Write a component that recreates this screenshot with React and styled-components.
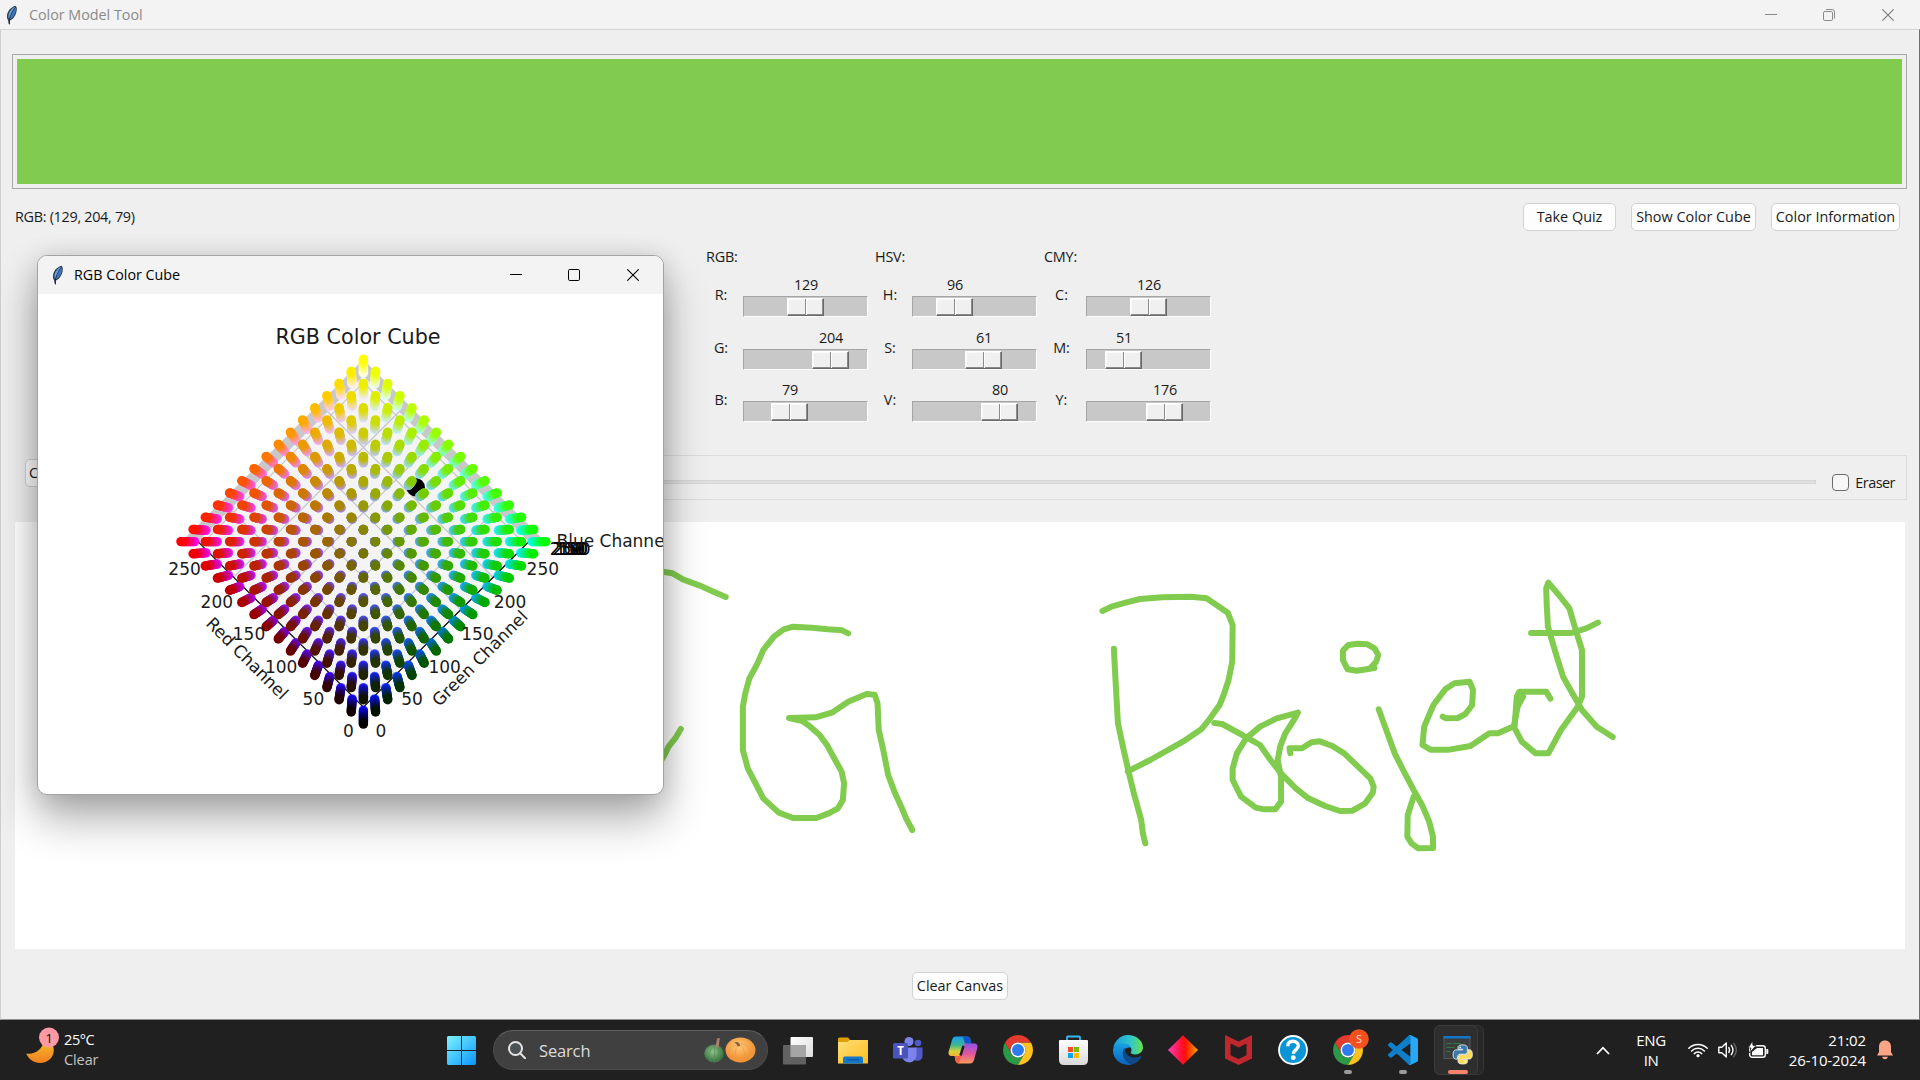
import React from "react";
import styled, { createGlobalStyle } from "styled-components";

const GREEN = "#81cc4f";

const Global = createGlobalStyle`
  html, body { margin: 0; padding: 0; background: #efefef; overflow: hidden; }
  * { box-sizing: border-box; }
  body { font-family: "Open Sans", "Noto Sans", sans-serif; font-size: 14.4px; color: #1a1a1a; }
  svg { display: block; flex: none; }
`;

const Desktop = styled.div`
  position: relative;
  width: 1920px;
  height: 1080px;
  overflow: hidden;
  display: flex;
  flex-direction: column;
`;

/* ---------- main window ---------- */

const MainWindow = styled.main`
  height: 1020px;
  display: flex;
  flex-direction: column;
  background: #efefef;
`;

const TitleBar = styled.header`
  height: ${(p) => p.$height}px;
  flex: none;
  display: flex;
  align-items: center;
  background: #f3f3f3;
  color: ${(p) => p.$color};
  padding-left: ${(p) => p.$inset}px;
`;

const WindowTitle = styled.span`
  font-size: 14.3px;
  line-height: 20px;
  margin-left: ${(p) => p.$gap}px;
  flex: 1;
`;

const WindowButtons = styled.div`
  display: flex;
  align-items: center;
  gap: 46px;
  padding-right: ${(p) => p.$right}px;
  & > :last-child { margin-left: 1px; }
`;

const Body = styled.div`
  flex: 1;
  display: flex;
  flex-direction: column;
  border-top: 1px solid #d5d5d5;
  border-left: 1px solid #cfcfcf;
  border-right: 1px solid #6f6f6f;
  border-bottom: 1px solid #8f9090;
`;

const PreviewFrame = styled.div`
  margin: 24px 12px 0 11px;
  height: 135px;
  border: 1px solid #a8a8a8;
  padding: 4px;
  flex: none;
`;

const Preview = styled.div`
  height: 100%;
  background: ${GREEN};
`;

const InfoRow = styled.div`
  margin-top: 14px;
  height: 28px;
  padding: 0 19px 0 14px;
  display: flex;
  align-items: center;
  gap: 15px;
`;

const InfoText = styled.span`
  flex: 1;
  letter-spacing: -0.3px;
  padding-bottom: 1px;
`;

const Button = styled.button`
  width: ${(p) => p.$width}px;
  height: 28px;
  padding: 0 0 1px;
  flex: none;
  border: 1px solid #d2d2d2;
  border-radius: 5px;
  background: #fdfdfd;
  font: inherit;
  color: inherit;
  white-space: nowrap;
`;

const Groups = styled.section`
  display: flex;
  gap: 7px;
  margin-left: 705px;
  margin-top: 15px;
  height: 182px;
`;

const Group = styled.div`
  display: grid;
  grid-template-columns: ${(p) => p.$label}px 125px;
  grid-template-rows: 24px repeat(3, 52.5px);
  column-gap: 7px;
`;

const GroupName = styled.span`
  grid-column: 1 / 3;
  line-height: 22px;
  letter-spacing: -0.2px;
`;

const ChannelName = styled.span`
  line-height: 20px;
  padding-top: 15px;
  text-align: center;
`;

const Scale = styled.div`
  padding-top: 4px;
`;

const ScaleValue = styled.div`
  width: 38px;
  margin-left: ${(p) => p.$x}px;
  text-align: center;
  line-height: 22px;
  letter-spacing: -0.3px;
`;

const Trough = styled.div`
  height: 21px;
  background: #c8c8c8;
  border: 1px solid;
  border-color: #a5a5a5 #fff #fff #a5a5a5;
  padding-top: 1px;
`;

const Thumb = styled.div`
  width: 37px;
  height: 18px;
  margin-left: ${(p) => p.$x - 1}px;
  display: flex;
  border: 1px solid;
  border-color: #fff #696969 #696969 #fff;
  box-shadow: inset -1px -1px 0 #8a8a8a, inset 1px 1px 0 #fafafa;
  background: #f0f0f0;
  &::before {
    content: "";
    width: 17px;
    border-right: 1px solid #8c8c8c;
  }
  &::after {
    content: "";
    width: 1px;
    background: #fff;
  }
`;

const BrushRow = styled.section`
  margin: 27px 12px 0 24px;
  height: 45px;
  flex: none;
  display: flex;
  align-items: flex-start;
  gap: 14px;
  & > button { margin-top: 4px; }
`;

const BrushBar = styled.div`
  flex: 1;
  height: 45px;
  border: 1px solid #dcdcdc;
  display: flex;
  padding: 3px 11px 0;
`;

const BrushTrack = styled.div`
  flex: 1;
  height: 4px;
  margin: 21px 16px 0 8px;
  background: #e0e0e0;
  border: 1px solid #d6d6d6;
`;

const Check = styled.label`
  display: flex;
  align-items: center;
  height: 28px;
  margin-top: 9px;
  gap: 6px;
  letter-spacing: -0.5px;
`;

const Box = styled.i`
  width: 17px;
  height: 17px;
  border: 1px solid #6b6b6b;
  border-radius: 4px;
  background: #f7f7f7;
`;

const CanvasArea = styled.section`
  margin: 22px 14px 0;
  height: 427px;
  flex: none;
  background: #fff;
`;

const ClearRow = styled.div`
  display: flex;
  justify-content: center;
  padding-top: 23px;
`;

/* ---------- popup ---------- */

const Popup = styled.section`
  position: absolute;
  left: 37px;
  top: 255px;
  width: 627px;
  height: 540px;
  border: 1px solid #a3a3a3;
  border-radius: 10px;
  background: #fff;
  overflow: hidden;
  box-shadow: 0 24px 44px rgba(0, 0, 0, 0.32), 0 2px 26px rgba(0, 0, 0, 0.13);
`;

/* ---------- taskbar ---------- */

const Taskbar = styled.footer`
  height: 60px;
  background: #202020;
  color: #fff;
  display: flex;
  align-items: center;
  font-size: 15px;
`;

const Weather = styled.div`
  width: 447px;
  height: 60px;
  display: flex;
  padding: 6px 0 0 26px;
  gap: 4px;
`;

const WeatherText = styled.div`
  padding-top: 4px;
  font-size: 14.5px;
  line-height: 20px;
  letter-spacing: -0.4px;
  & > div + div { color: #c4c4c4; letter-spacing: -0.1px; }
`;

const SearchBox = styled.div`
  width: 275px;
  height: 40px;
  margin-left: 17px;
  margin-right: 15px;
  border-radius: 20px;
  background: #404040;
  border: 1px solid #4c4c4c;
  border-top-color: #626262;
  display: flex;
  align-items: center;
  padding: 0 11px 0 14px;
`;

const SearchText = styled.span`
  flex: 1;
  margin-left: 13px;
  font-size: 16.5px;
  letter-spacing: -0.15px;
  color: #dcdcdc;
`;

const Apps = styled.div`
  display: flex;
  align-items: center;
  height: 60px;
`;

const AppSlot = styled.div`
  width: 55px;
  height: 60px;
  display: flex;
  flex-direction: column;
  align-items: center;
  justify-content: ${(p) => (p.$running ? "flex-end" : "center")};
  padding-bottom: ${(p) => (p.$running ? 6 : 0)}px;
  &::after {
    content: "";
    display: ${(p) => (p.$running ? "block" : "none")};
    width: 8px;
    height: 4px;
    margin-top: 5px;
    border-radius: 2px;
    background: #9a9a9a;
  }
`;

const ActiveStack = styled.div`
  width: 50px;
  height: 50px;
  margin-left: 3px;
  border-radius: 6px;
  background: #282828;
  border: 1px solid #363636;
`;

const ActiveTile = styled.div`
  width: 44px;
  height: 50px;
  margin: -1px;
  border: 1px solid #3c3c3c;
  border-radius: 6px;
  background: #2e2e2e;
  display: flex;
  flex-direction: column;
  align-items: center;
  padding: 9px 0 0 4px;
  &::after {
    content: "";
    width: 20px;
    height: 4px;
    margin-top: 5px;
    border-radius: 2px;
    background: #f4836a;
  }
`;

const Tray = styled.div`
  flex: 1;
  height: 60px;
  display: flex;
  align-items: center;
  justify-content: flex-end;
  padding-right: 27px;
`;

const TrayText = styled.div`
  text-align: ${(p) => p.$align};
  width: ${(p) => p.$width}px;
  margin-right: ${(p) => p.$right}px;
  line-height: 20px;
  padding-bottom: 1px;
  letter-spacing: ${(p) => p.$spacing}px;
`;

const Spacer = styled.i`
  width: ${(p) => p.$w}px;
`;

/* ---------- drawings ---------- */

const Feather = () => (
  <svg width="12" height="20" viewBox="0 0 12 20">
    <path d="M9.5 .8C5 2 1.500 6 1 10.500c-.2 2 .2 3.500 1 4.500L3 19.500l1-.2-.2-3.800C7 14.500 9.500 11 10.500 6.500 11 4 11 2 9.500.8z" fill="#2c3d55" />
    <path d="M9.300 1.700C6 3 3 6.500 2.500 10.500c-.2 1.500 0 2.500.4 3.300C4.500 9 6 5.500 9.300 1.700z" fill="#6ea5e0" />
    <path d="M9.800 2.200C7 5.500 5 10 4 14.200 6.800 12.800 8.800 10 9.700 6.200c.4-1.600.5-3 .1-4z" fill="#3c78c2" />
    <path d="M3.300 19L3.500 14" stroke="#222" strokeWidth="1" />
  </svg>
);

const Minimize = ({ color }) => (
  <svg width="12" height="12" viewBox="0 0 12 12"><path d="M0 5.500h12" stroke={color} /></svg>
);
const Maximize = ({ color }) => (
  <svg width="12" height="12" viewBox="0 0 12 12"><rect x=".5" y=".5" width="11" height="11" rx="1.300" fill="none" stroke={color} /></svg>
);
const Restore = ({ color }) => (
  <svg width="12" height="12" viewBox="0 0 12 12" fill="none" stroke={color}>
    <rect x=".5" y="2.500" width="9" height="9" rx="1.300" />
    <path d="M3 .5h6a2.500 2.500 0 0 1 2.500 2.500v6.500" />
  </svg>
);
const Close = ({ color }) => (
  <svg width="12" height="12" viewBox="0 0 12 12"><path d="M.3.3l11.400 11.400M11.700.3L.3 11.700" stroke={color} strokeWidth="1.100" /></svg>
);

const STROKES_LEFT = [
  "M40 392L60 396 80 400 105 418 145 436 180 455 210 471",
  "M100 867L88 892 70 920 60 945 50 965",
  "M510 580L495 571 460 568 420 563 375 560 352 568 328 590 302 630 288 670 268 715 258 760 252 800 252 930 264 985 285 1035 302 1075 340 1118 375 1134 432 1134 462 1120 485 1105 497 1080 500 1030 494 995 476 955 458 915 440 885 415 858 398 843 365 834 430 832 470 818 510 785 555 762 575 764 582 790 585 870 596 930 608 1005 625 1060 640 1100 652 1135 667 1170",
  "M1133 513L1155 500 1190 488 1225 477 1280 472 1350 470 1388 475 1415 497 1440 518 1452 555 1451 665 1442 720 1430 765 1420 795 1395 838 1375 868 1330 905 1250 960 1195 994",
  "M1161 626L1165 720 1171 850 1185 930 1198 1000 1210 1060 1228 1140 1232 1180 1238 1210",
];

const STROKES_RIGHT = [
  "M-109 849L-90 852 -35 890 0 915 25 960 50 1000 85 1045 115 1075 155 1098 190 1113 220 1112 250 1090 268 1058 270 1040 262 1015 200 940 172 918 142 904 122 907 100 925 70 925 72 940",
  "M90 818L40 835 0 860 -33 895 -55 940 -65 985 -65 1020 -45 1070 -10 1103 10 1108 36 1108 50 1085 50 1010 42 960 48 920 60 880 78 845 90 818",
  "M272 684L230 692 208 688 197 660 197 632 210 615 232 611 255 613 272 625 281 645 276 665 264 682",
  "M282 808L300 870 320 940 340 990 365 1050 385 1095 402 1145 411 1190 411 1224 376 1225 360 1210 350 1190 351 1125 365 1070",
  "M434 830L442 835 470 834 488 822 504 795 506 750 498 725 462 730 440 748 412 795 390 860 386 915 405 929 450 929 500 918 545 880 565 880 605 858 610 770 616 755 680 755 690 776",
  "M625 770L612 800 603 860 622 905 655 940 685 940 715 870 755 800 765 770 765 630 750 570 735 505 710 465 685 428 680 445 681 490 684 560 705 650 720 710 740 755 765 810 800 860 838 891",
  "M644 579L740 579 775 565 803 548",
];

const Handwriting = () => (
  <svg width="1890" height="427" viewBox="15 522 1890 427" fill="none" stroke={GREEN} strokeWidth="6" strokeLinecap="round" strokeLinejoin="round">
    <g transform="translate(640 440) scale(0.40816 0.33333)">
      {STROKES_LEFT.map((d) => <path key={d} d={d} vectorEffect="non-scaling-stroke" />)}
    </g>
    <g transform="translate(1260 440) scale(0.42091 0.33333)">
      {STROKES_RIGHT.map((d) => <path key={d} d={d} vectorEffect="non-scaling-stroke" />)}
    </g>
  </svg>
);

const CX = 363.4;
const CY = 541.6;
const NEAR = 182.5;
const FAR = 168.5;
const PANE = 165.5;

/* half-diagonal of the cube slice at a given blue value */
const sliceHalf = (b) => 1 / (1 / NEAR + (b / 255) * (1 / FAR - 1 / NEAR));
const place = (r, g, half) => [CX + ((g - r) / 255) * half, CY - ((r + g - 255) / 255) * half];

const cubeDots = () => {
  const steps = Array.from({ length: 16 }, (_, i) => i * 17);
  const out = [];
  const [px, py] = place(129, 204, sliceHalf(79));
  out.push(<circle key="picked" cx={px} cy={py} r="9.200" fill="#000" />);
  [...steps].reverse().forEach((b) => {
    const half = sliceHalf(b);
    steps.forEach((r) =>
      steps.forEach((g) => {
        const [x, y] = place(r, g, half);
        out.push(
          <circle key={`${r}-${g}-${b}`} cx={x.toFixed(2)} cy={y.toFixed(2)} r="4.700" fill={`rgb(${r},${g},${b})`} fillOpacity={(1 - (0.25 * b) / 255).toFixed(2)} />
        );
      })
    );
  });
  return out;
};

const TICKS = [0, 50, 100, 150, 200, 250];
const gridLine = (a, b) => `M${a[0]} ${a[1]}L${b[0]} ${b[1]}`;

const CubePlot = () => (
  <svg width="625" height="500" viewBox="38 294 625 500" fontFamily="'DejaVu Sans', sans-serif" fontSize="17" fill="#1a1a1a">
    <text x={358} y="343.500" fontSize="20.700" textAnchor="middle">RGB Color Cube</text>
    <path d={`M${CX - PANE} ${CY}L${CX} ${CY - PANE}L${CX + PANE} ${CY}L${CX} ${CY + PANE}Z`} fill="#f4f4f4" />
    <path d={`M${CX - PANE} ${CY}L${CX} ${CY - PANE}L${CX + PANE} ${CY}L${CX + 182} ${CY}L${CX} ${CY - 182}L${CX - 182} ${CY}Z`} fill="#c8c8c8" />
    <g stroke="#c4c4c4" strokeWidth="1.200" fill="none">
      {TICKS.map((v) => (
        <path key={v} d={gridLine(place(v, 0, PANE), place(v, 255, PANE)) + gridLine(place(0, v, PANE), place(255, v, PANE))} />
      ))}
    </g>
    <path d={`M${CX - PANE} ${CY}L${CX} ${CY + PANE}L${CX + PANE} ${CY}`} fill="none" stroke="#111" strokeWidth="1.300" />
    <g>{cubeDots()}</g>
    {TICKS.map((v, i) => (
      <React.Fragment key={v}>
        <text x={i ? 345.6 - i * 32.2 : 348.5} y={737.4 - i * 32.4} textAnchor="middle">{v}</text>
        <text x={i ? 379.3 + i * 32.7 : 381} y={737.4 - i * 32.4} textAnchor="middle">{v}</text>
        <text x={580 - i * 2.8} y="555.300" textAnchor="middle" fill="#000">{v}</text>
      </React.Fragment>
    ))}
    <text transform="translate(246.500 659) rotate(45)" textAnchor="middle" y="5">Red Channel</text>
    <text transform="translate(480.500 659) rotate(-45)" textAnchor="middle" y="5">Green Channel</text>
    <text x="556.500" y="546.500">Blue Channel</text>
  </svg>
);

const Moon = () => (
  <svg width="34" height="48" viewBox="26 1026 34 48">
    <defs><linearGradient id="moon" x1="0" y1="0" x2="0" y2="1"><stop offset="0" stopColor="#f8c42c" /><stop offset="1" stopColor="#f08020" /></linearGradient></defs>
    <path d="M26.300 1053.500c7 1.500 17-3 18-15 5 2 9.500 6 9.500 11.500 0 7.500-6 13-13.500 13-6.500 0-12-4-14-9.500z" fill="url(#moon)" />
    <circle cx="49" cy="1037.500" r="10" fill="#ff99a4" />
    <text x="49" y="1042.500" textAnchor="middle" fontSize="13.500" fill="#111">1</text>
  </svg>
);

const WindowsLogo = () => (
  <svg width="29" height="29" viewBox="0 0 29 29">
    <defs><linearGradient id="win" gradientUnits="userSpaceOnUse" x1="0" y1="0" x2="29" y2="29"><stop offset="0" stopColor="#7cf3ff" /><stop offset="1" stopColor="#0a95fb" /></linearGradient></defs>
    <path fill="url(#win)" d="M1 0h13v14H0V1zM15 0h13l1 1v13H15zM0 15h14v14H1l-1-1zM15 15h14v13l-1 1H15z" />
  </svg>
);

const Magnifier = () => (
  <svg width="18" height="18" viewBox="0 0 18 18" fill="none" stroke="#e4e4e4" strokeWidth="2"><circle cx="7.500" cy="7.500" r="6.500" fill="#4c5254" /><path d="M12.200 12.200l5 5.200" strokeLinecap="round" /></svg>
);

const Pumpkins = () => (
  <svg width="52" height="26" viewBox="0 0 52 26">
    <defs>
      <radialGradient id="orange" cx=".45" cy=".35"><stop offset="0" stopColor="#ffcb7a" /><stop offset="1" stopColor="#f2953a" /></radialGradient>
      <radialGradient id="gourd" cx=".45" cy=".4"><stop offset="0" stopColor="#8fc48a" /><stop offset="1" stopColor="#3f7a47" /></radialGradient>
    </defs>
    <ellipse cx="10" cy="16.500" rx="9.800" ry="9" fill="url(#gourd)" />
    <path d="M10 9c-5 3-6 11-3 16M11 9c5 3 6 11 2 16M10.500 9v16.500" stroke="#568f59" strokeWidth=".6" fill="none" />
    <path d="M10.500 10.500c2-3 2-6 2.500-9l3-.5c-1 3-.5 6-1.500 9.500z" fill="#a8806c" />
    <ellipse cx="36.500" cy="13" rx="15" ry="12.500" fill="url(#orange)" />
    <path d="M33 8c-7 0-11 8-6 15M34 8c-3 4-4 12-1 17M36 8c5 4 6 12 3 17M37 7c8 0 12 8 7 15" stroke="#e9953f" strokeWidth=".6" fill="none" />
    <path d="M30.500 5.500c2-1 4-.3 5 1l.8 2.500-2.500.4-1-2z" fill="#8a6042" />
  </svg>
);

const TaskView = () => (
  <svg width="30" height="29" viewBox="0 0 30 29">
    <defs><linearGradient id="tv" x1="0" y1="0" x2="1" y2="1"><stop offset="0" stopColor="#fff" /><stop offset="1" stopColor="#dcdcdc" /></linearGradient></defs>
    <rect x="7.500" y="1" width="22.500" height="20" rx="1" fill="url(#tv)" />
    <rect x="0" y="9" width="23" height="19.500" rx="1" fill="#6e6e6e" fillOpacity=".85" />
    <path d="M7.500 9H23v12H7.500z" fill="#a5a5a5" />
  </svg>
);

const Folder = () => (
  <svg width="30" height="27" viewBox="0 0 30 27">
    <defs><linearGradient id="fold" x1="0" y1="0" x2="1" y2="1"><stop offset="0" stopColor="#ffe07a" /><stop offset="1" stopColor="#fcbc1c" /></linearGradient></defs>
    <path d="M0 2Q0 .5 1.500.5h8.500L12.500 3.500V10H0z" fill="#e0a106" />
    <path d="M0 5h9.500l2.500-2H30v23.500H0z" fill="url(#fold)" />
    <path d="M5 26.500v-5Q5 19.500 7 19.500h16q2 0 2 2v5z" fill="#1178cc" />
    <path d="M9 22.800h12" stroke="#0a4d8f" strokeWidth="1" />
  </svg>
);

const Teams = () => (
  <svg width="30" height="27" viewBox="0 0 30 27">
    <circle cx="25" cy="6" r="3.300" fill="#5059c9" />
    <path d="M22 10.500h7.500V19a5 5 0 0 1-7.500 4.200z" fill="#5059c9" />
    <circle cx="16" cy="4.500" r="4.500" fill="#7b83eb" />
    <path d="M9 10.500h14.500V19a7.300 7.300 0 0 1-14.500 0z" fill="#7b83eb" />
    <rect x="0" y="6" width="15" height="15.500" rx="1.500" fill="#4b53bc" />
    <text x="7.500" y="17.800" fontSize="11.500" fontWeight="700" fill="#fff" textAnchor="middle">T</text>
  </svg>
);

const Copilot = () => (
  <svg width="30" height="28" viewBox="0 0 30 28">
    <defs>
      <linearGradient id="cpA" x1="0" y1="0" x2="0" y2="1"><stop offset="0" stopColor="#1a9df0" /><stop offset=".45" stopColor="#3db88c" /><stop offset=".75" stopColor="#d8d23c" /><stop offset="1" stopColor="#f6b332" /></linearGradient>
      <linearGradient id="cpB" x1=".3" y1="0" x2=".3" y2="1"><stop offset="0" stopColor="#8f52e8" /><stop offset=".5" stopColor="#e0559e" /><stop offset="1" stopColor="#fb9a5c" /></linearGradient>
    </defs>
    <path d="M8 .5h11c2 0 3 1 3.500 3l1 4h-5L14 20H4C1 20 0 18 .700 15.500L4 4C4.800 1.500 6 .5 8 .5z" fill="url(#cpA)" />
    <path d="M14 .5h5c2 0 3 1 3.500 3l1 4h-5c-1.500 0-2-1-2.500-3s-1-3.500-2-4z" fill="#1552c8" />
    <path d="M22 27.500H11c-2 0-3-1-3.500-3l-1-4.500h5L16 7.500h10c3 0 4 2 3.300 4.500L26 24c-.8 2.500-2 3.500-4 3.500z" fill="url(#cpB)" />
    <path d="M7 20h6l-2 7.400c-2 0-3-1-3.500-3z" fill="#f2643c" />
    <path d="M15.500 10l-3 9.500" stroke="#202020" strokeWidth="2.500" />
  </svg>
);

const ChromeMark = () => (
  <>
    <path d="M3.220 12A24 24 0 0 0 24 48L34.390 30A12 12 0 0 1 13.610 30Z" fill="#2a9a46" />
    <path d="M24 48A24 24 0 0 0 44.780 12H24A12 12 0 0 1 34.390 30Z" fill="#fcc31e" />
    <path d="M44.780 12A24 24 0 0 0 3.220 12L13.610 30A12 12 0 0 1 24 12Z" fill="#e33b2e" />
    <circle cx="24" cy="24" r="12" fill="#fff" />
    <circle cx="24" cy="24" r="9.600" fill="#2f7bed" />
  </>
);

const Chrome = () => (
  <svg width="30" height="30" viewBox="0 0 48 48"><ChromeMark /></svg>
);

const ChromeProfile = () => (
  <svg width="42" height="36" viewBox="-6 -6 42 36">
    <g transform="scale(.625)"><ChromeMark /></g>
    <circle cx="26" cy="4" r="9.800" fill="#f4511e" />
    <text x="26" y="8" fontSize="11" textAnchor="middle" fill="#fbd5c8">S</text>
  </svg>
);

const Store = () => (
  <svg width="29" height="30" viewBox="0 0 29 30">
    <defs><linearGradient id="bag" x1="0" y1="0" x2="0" y2="1"><stop offset="0" stopColor="#fff" /><stop offset="1" stopColor="#d9d9d9" /></linearGradient></defs>
    <path d="M8 7V2.200Q8 1.500 8.700 1.500h11.600q.7 0 .7.700V7" fill="none" stroke="#35b8f1" strokeWidth="1.800" />
    <path d="M0 6q0-1 1-1h27q1 0 1 1v19q0 5-5 5H5q-5 0-5-5z" fill="url(#bag)" />
    <path d="M9 12h5v5H9z" fill="#f25022" /><path d="M15 12h5v5h-5z" fill="#7fba00" /><path d="M9 18h5v5H9z" fill="#00a4ef" /><path d="M15 18h5v5h-5z" fill="#ffb900" />
  </svg>
);

const Edge = () => (
  <svg width="30" height="30" viewBox="0 0 30 30">
    <defs>
      <linearGradient id="eA" x1="0" y1=".3" x2="1" y2=".3"><stop offset="0" stopColor="#1a9be0" /><stop offset=".6" stopColor="#30c8c8" /><stop offset="1" stopColor="#6be04a" /></linearGradient>
      <linearGradient id="eB" x1="0" y1="0" x2="0" y2="1"><stop offset="0" stopColor="#18a0e4" /><stop offset="1" stopColor="#0b62c0" /></linearGradient>
    </defs>
    <path d="M.3 13.500C1 6 7.500 0 15 0c8 0 15 5.500 15 12.500 0 4-3.500 7-7.500 7-3 0-5.500-1-4.500-2.500C20 13.500 16 9 11 9 6 9 2 11 .3 13.500z" fill="url(#eA)" />
    <path d="M.3 13.500C2 10.500 6 8.500 10.500 8.500c3 0 6 1.500 7.500 4C12 12 9.500 16 10.500 20.500 11.500 25 15 28.500 19.500 29.300 9.500 32 0 25 0 15.500z" fill="url(#eB)" />
    <path d="M11 13.500C8 17.500 10 26 18 29.500 23 28.500 26.500 25.500 28.500 22c.3-.6-.2-1-.8-.7C22 24 15 22.500 12.500 17c-.5-1.200-.8-2.500 0-4z" fill="#114a8b" />
  </svg>
);

const Diamond = () => (
  <svg width="30" height="30" viewBox="0 0 30 30">
    <defs><linearGradient id="dia"><stop offset="0" stopColor="#ff3fb8" /><stop offset=".45" stopColor="#ff1030" /><stop offset=".6" stopColor="#ff1400" /><stop offset="1" stopColor="#ffa800" /></linearGradient></defs>
    <path d="M15 .3L30 15 15 29.700 0 15z" fill="url(#dia)" />
  </svg>
);

const McAfee = () => (
  <svg width="27" height="30" viewBox="0 0 27 30">
    <path d="M0 0l13.500 6.500L27 0v23.500L13.500 30 0 23.500zM5.500 8.500v11.700l8 3.900 8-3.900V8.500l-8 4z" fill="#c0282d" fillRule="evenodd" />
  </svg>
);

const Help = () => (
  <svg width="30" height="30" viewBox="0 0 30 30">
    <circle cx="15" cy="15" r="14" fill="#0a96d6" stroke="#fff" strokeWidth="1.800" />
    <path d="M9.800 11.200C9.800 8 12 6.300 15 6.300s5.300 1.800 5.300 4.500c0 4-5 4-5 8" fill="none" stroke="#fff" strokeWidth="3.400" />
    <circle cx="15.300" cy="22.700" r="2.400" fill="#fff" />
  </svg>
);

const Code = () => (
  <svg width="30" height="30" viewBox="0 0 100 100">
    <path fillRule="evenodd" fill="#0d7fcb" d="M96.460 10.800 75.860.880a6.200 6.200 0 0 0-7.100 1.200L29.300 38.040 12.200 25.050a4.160 4.160 0 0 0-5.300.240L1.400 30.300a4.160 4.160 0 0 0 0 6.150L16.200 50 1.400 63.500a4.160 4.160 0 0 0 0 6.150l5.500 5a4.160 4.160 0 0 0 5.300.240L29.300 62 68.760 98a6.200 6.200 0 0 0 7.100 1.200l20.600-9.900A6.250 6.250 0 0 0 100 83.600V16.400a6.250 6.250 0 0 0-3.540-5.600zM75 72.700 45.100 50 75 27.300z" />
    <path fill="#2aa7f2" d="M75.860.880l20.600 9.920A6.250 6.250 0 0 1 100 16.400v67.200a6.250 6.250 0 0 1-3.540 5.700l-20.600 9.900a6.200 6.200 0 0 1-7.100-1.200C71 99.500 75 98 75 94V6c0-4-4-5-6.240-3.920a6.200 6.200 0 0 1 7.100-1.200z" />
  </svg>
);

const PythonApp = () => (
  <svg width="30" height="30" viewBox="0 0 30 30">
    <rect x="1" y="1.500" width="26" height="22" fill="#3a3d3e" stroke="#55595b" />
    <path d="M.5 1h27v2.500H.5z" fill="#1275c6" />
    <path d="M3.500 8.500h5M10 8.500h8M3.500 12.500h8M3.500 16.500h4" stroke="#2f7a3c" strokeWidth="1.200" />
    <g transform="translate(.5 .3) scale(.6)" stroke="#e8eef2" strokeWidth="1.500">
      <path d="M31.885 16c-8.124 0-7.617 3.523-7.617 3.523l.01 3.650h7.752v1.095H21.197S16 23.678 16 31.876c0 8.196 4.537 7.906 4.537 7.906h2.708v-3.804s-.146-4.537 4.465-4.537h7.688s4.320.070 4.320-4.175v-7.019S40.374 16 31.885 16z" fill="#3d78ab" />
      <path d="M32.115 47.833c8.124 0 7.617-3.523 7.617-3.523l-.01-3.650H31.970v-1.095h10.832S48 40.155 48 31.958c0-8.197-4.537-7.906-4.537-7.906h-2.708v3.803s.146 4.537-4.465 4.537h-7.688s-4.320-.070-4.320 4.175v7.019s-.656 4.247 7.833 4.247z" fill="#ffdc55" />
      <circle cx="27.600" cy="20" r="1.400" fill="#fff" stroke="none" />
      <circle cx="36.400" cy="44" r="1.400" fill="#fff" stroke="none" />
    </g>
  </svg>
);

const Chevron = () => (
  <svg width="14" height="9" viewBox="0 0 14 9"><path d="M1 8l6-6.300L13 8" fill="none" stroke="#fff" strokeWidth="1.800" /></svg>
);
const Wifi = () => (
  <svg width="20" height="16" viewBox="0 0 20 16" fill="none" stroke="#fff" strokeWidth="1.500" strokeLinecap="round">
    <path d="M.8 6.200a13 13 0 0 1 18.400 0M3.600 9a9 9 0 0 1 12.800 0M6.300 11.600a5.300 5.300 0 0 1 7.400 0" />
    <circle cx="10" cy="13.800" r="1.300" fill="#fff" stroke="none" />
    <circle cx="10" cy="13.800" r=".8" />
  </svg>
);
const Speaker = () => (
  <svg width="20" height="18" viewBox="0 0 20 18" fill="none" stroke="#fff" strokeWidth="1.400" strokeLinecap="round" strokeLinejoin="round">
    <path d="M.8 6.300h3L8.300 2v14l-4.500-4.300h-3z" />
    <path d="M10.800 6.500q1.600 2.500 0 5M13.300 4.300q3.300 4.700 0 9.400" />
    <path d="M15.800 2.300q5 6.700 0 13.400" stroke="#666" />
  </svg>
);
const Battery = () => (
  <svg width="21" height="18" viewBox="0 0 21 18">
    <rect x="1.700" y="4.700" width="15.600" height="11.600" rx="2.500" fill="none" stroke="#fff" strokeWidth="1.400" />
    <path d="M18.300 8h1q1 0 1 1v3q0 1-1 1h-1z" fill="#fff" />
    <path d="M4 14.300V11l5-4h6v7.300z" fill="#fff" />
    <path d="M4.500 0L0 7h3L1.500 12 8 4.500H5z" fill="#fff" stroke="#202020" strokeWidth=".8" />
  </svg>
);
const Bell = () => (
  <svg width="16" height="20" viewBox="0 0 16 20" fill="#fba586">
    <path d="M8 .5c3.700 0 6 2.700 6 6v5.500l2 3.500H0l2-3.500V6.500c0-3.300 2.300-6 6-6z" />
    <path d="M5 16.700h6q-.8 2.500-3 2.500t-3-2.500z" />
  </svg>
);

/* ---------- data ---------- */

const GROUPS = [
  { name: "RGB:", label: 30, channels: [["R:", 129, 44], ["G:", 204, 69], ["B:", 79, 28]] },
  { name: "HSV:", label: 30, channels: [["H:", 96, 24], ["S:", 61, 53], ["V:", 80, 69]] },
  { name: "CMY:", label: 35, channels: [["C:", 126, 44], ["M:", 51, 19], ["Y:", 176, 60]] },
];

export default function App() {
  return (
    <Desktop>
      <Global />
      <MainWindow>
        <TitleBar $height={29} $color="#8a8a8a" $inset={6}>
          <Feather />
          <WindowTitle $gap={11}>Color Model Tool</WindowTitle>
          <WindowButtons $right={26}>
            <Minimize color="#8a8a8a" />
            <Restore color="#8a8a8a" />
            <Close color="#7a7a7a" />
          </WindowButtons>
        </TitleBar>
        <Body>
          <PreviewFrame><Preview /></PreviewFrame>
          <InfoRow>
            <InfoText>RGB: (129, 204, 79)</InfoText>
            <Button $width={93}>Take Quiz</Button>
            <Button $width={125}>Show Color Cube</Button>
            <Button $width={129}>Color Information</Button>
          </InfoRow>
          <Groups>
            {GROUPS.map((g) => (
              <Group key={g.name} $label={g.label}>
                <GroupName>{g.name}</GroupName>
                {g.channels.map(([name, value, x]) => (
                  <React.Fragment key={name}>
                    <ChannelName>{name}</ChannelName>
                    <Scale>
                      <ScaleValue $x={x}>{value}</ScaleValue>
                      <Trough><Thumb $x={x} /></Trough>
                    </Scale>
                  </React.Fragment>
                ))}
              </Group>
            ))}
          </Groups>
          <BrushRow>
            <Button $width={98}>Choose Color</Button>
            <BrushBar>
              <BrushTrack />
              <Check><Box />Eraser</Check>
            </BrushBar>
          </BrushRow>
          <CanvasArea><Handwriting /></CanvasArea>
          <ClearRow><Button $width={96}>Clear Canvas</Button></ClearRow>
        </Body>
      </MainWindow>

      <Taskbar>
        <Weather>
          <Moon />
          <WeatherText>
            <div>25°C</div>
            <div>Clear</div>
          </WeatherText>
        </Weather>
        <WindowsLogo />
        <SearchBox>
          <Magnifier />
          <SearchText>Search</SearchText>
          <Pumpkins />
        </SearchBox>
        <Apps>
          <TaskView />
          <Spacer $w={12.5} />
          <AppSlot><Folder /></AppSlot>
          <AppSlot><Teams /></AppSlot>
          <AppSlot><Copilot /></AppSlot>
          <AppSlot><Chrome /></AppSlot>
          <AppSlot><Store /></AppSlot>
          <AppSlot><Edge /></AppSlot>
          <AppSlot><Diamond /></AppSlot>
          <AppSlot><McAfee /></AppSlot>
          <AppSlot><Help /></AppSlot>
          <AppSlot $running><ChromeProfile /></AppSlot>
          <AppSlot $running><Code /></AppSlot>
          <ActiveStack><ActiveTile><PythonApp /></ActiveTile></ActiveStack>
        </Apps>
        <Tray>
          <Chevron />
          <Spacer $w={26} />
          <TrayText $align="center" $width={30} $right={22} $spacing={-0.4}>
            <div>ENG</div>
            <div>IN</div>
          </TrayText>
          <Wifi />
          <Spacer $w={10} />
          <Speaker />
          <Spacer $w={10} />
          <Battery />
          <TrayText $align="right" $width={97} $right={11} $spacing={-0.1}>
            <div>21:02</div>
            <div>26-10-2024</div>
          </TrayText>
          <Bell />
        </Tray>
      </Taskbar>

      <Popup>
        <TitleBar $height={38} $color="#000" $inset={14}>
          <Feather />
          <WindowTitle $gap={10}>RGB Color Cube</WindowTitle>
          <WindowButtons $right={24}>
            <Minimize color="#000" />
            <Maximize color="#000" />
            <Close color="#000" />
          </WindowButtons>
        </TitleBar>
        <CubePlot />
      </Popup>
    </Desktop>
  );
}
